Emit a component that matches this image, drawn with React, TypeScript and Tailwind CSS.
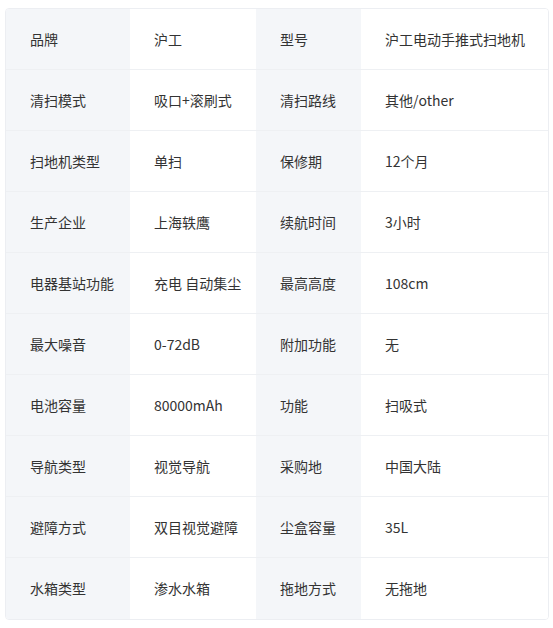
import React from 'react'

const ROWS: [string, string, string, string][] = [
  ['品牌', '沪工', '型号', '沪工电动手推式扫地机'],
  ['清扫模式', '吸口+滚刷式', '清扫路线', '其他/other'],
  ['扫地机类型', '单扫', '保修期', '12个月'],
  ['生产企业', '上海轶鹰', '续航时间', '3小时'],
  ['电器基站功能', '充电 自动集尘', '最高高度', '108cm'],
  ['最大噪音', '0-72dB', '附加功能', '无'],
  ['电池容量', '80000mAh', '功能', '扫吸式'],
  ['导航类型', '视觉导航', '采购地', '中国大陆'],
  ['避障方式', '双目视觉避障', '尘盒容量', '35L'],
  ['水箱类型', '渗水水箱', '拖地方式', '无拖地'],
]

export default function App() {
  return (
    <div className="w-[553px] h-[628px] bg-white pt-[8px] pl-[5px]" style={{ fontFamily: '"Noto Sans CJK SC", "Noto Sans", sans-serif' }}>
      <div className="w-[544px] border border-[#eceef2] rounded-[4px] overflow-hidden">
        {ROWS.map((r, i) => (
          <div
            key={i}
            className={`grid grid-cols-[124px_126px_105px_1fr] h-[61px] text-[14px] text-[#333] ${i < ROWS.length - 1 ? 'border-b border-[#eef0f3]' : ''}`}
          >
            <div className="bg-[#f4f6f9] flex items-center pl-[24px]">{r[0]}</div>
            <div className="bg-white flex items-center pl-[24px]">{r[1]}</div>
            <div className="bg-[#f4f6f9] flex items-center pl-[24px]">{r[2]}</div>
            <div className="bg-white flex items-center pl-[24px]">{r[3]}</div>
          </div>
        ))}
      </div>
    </div>
  )
}
